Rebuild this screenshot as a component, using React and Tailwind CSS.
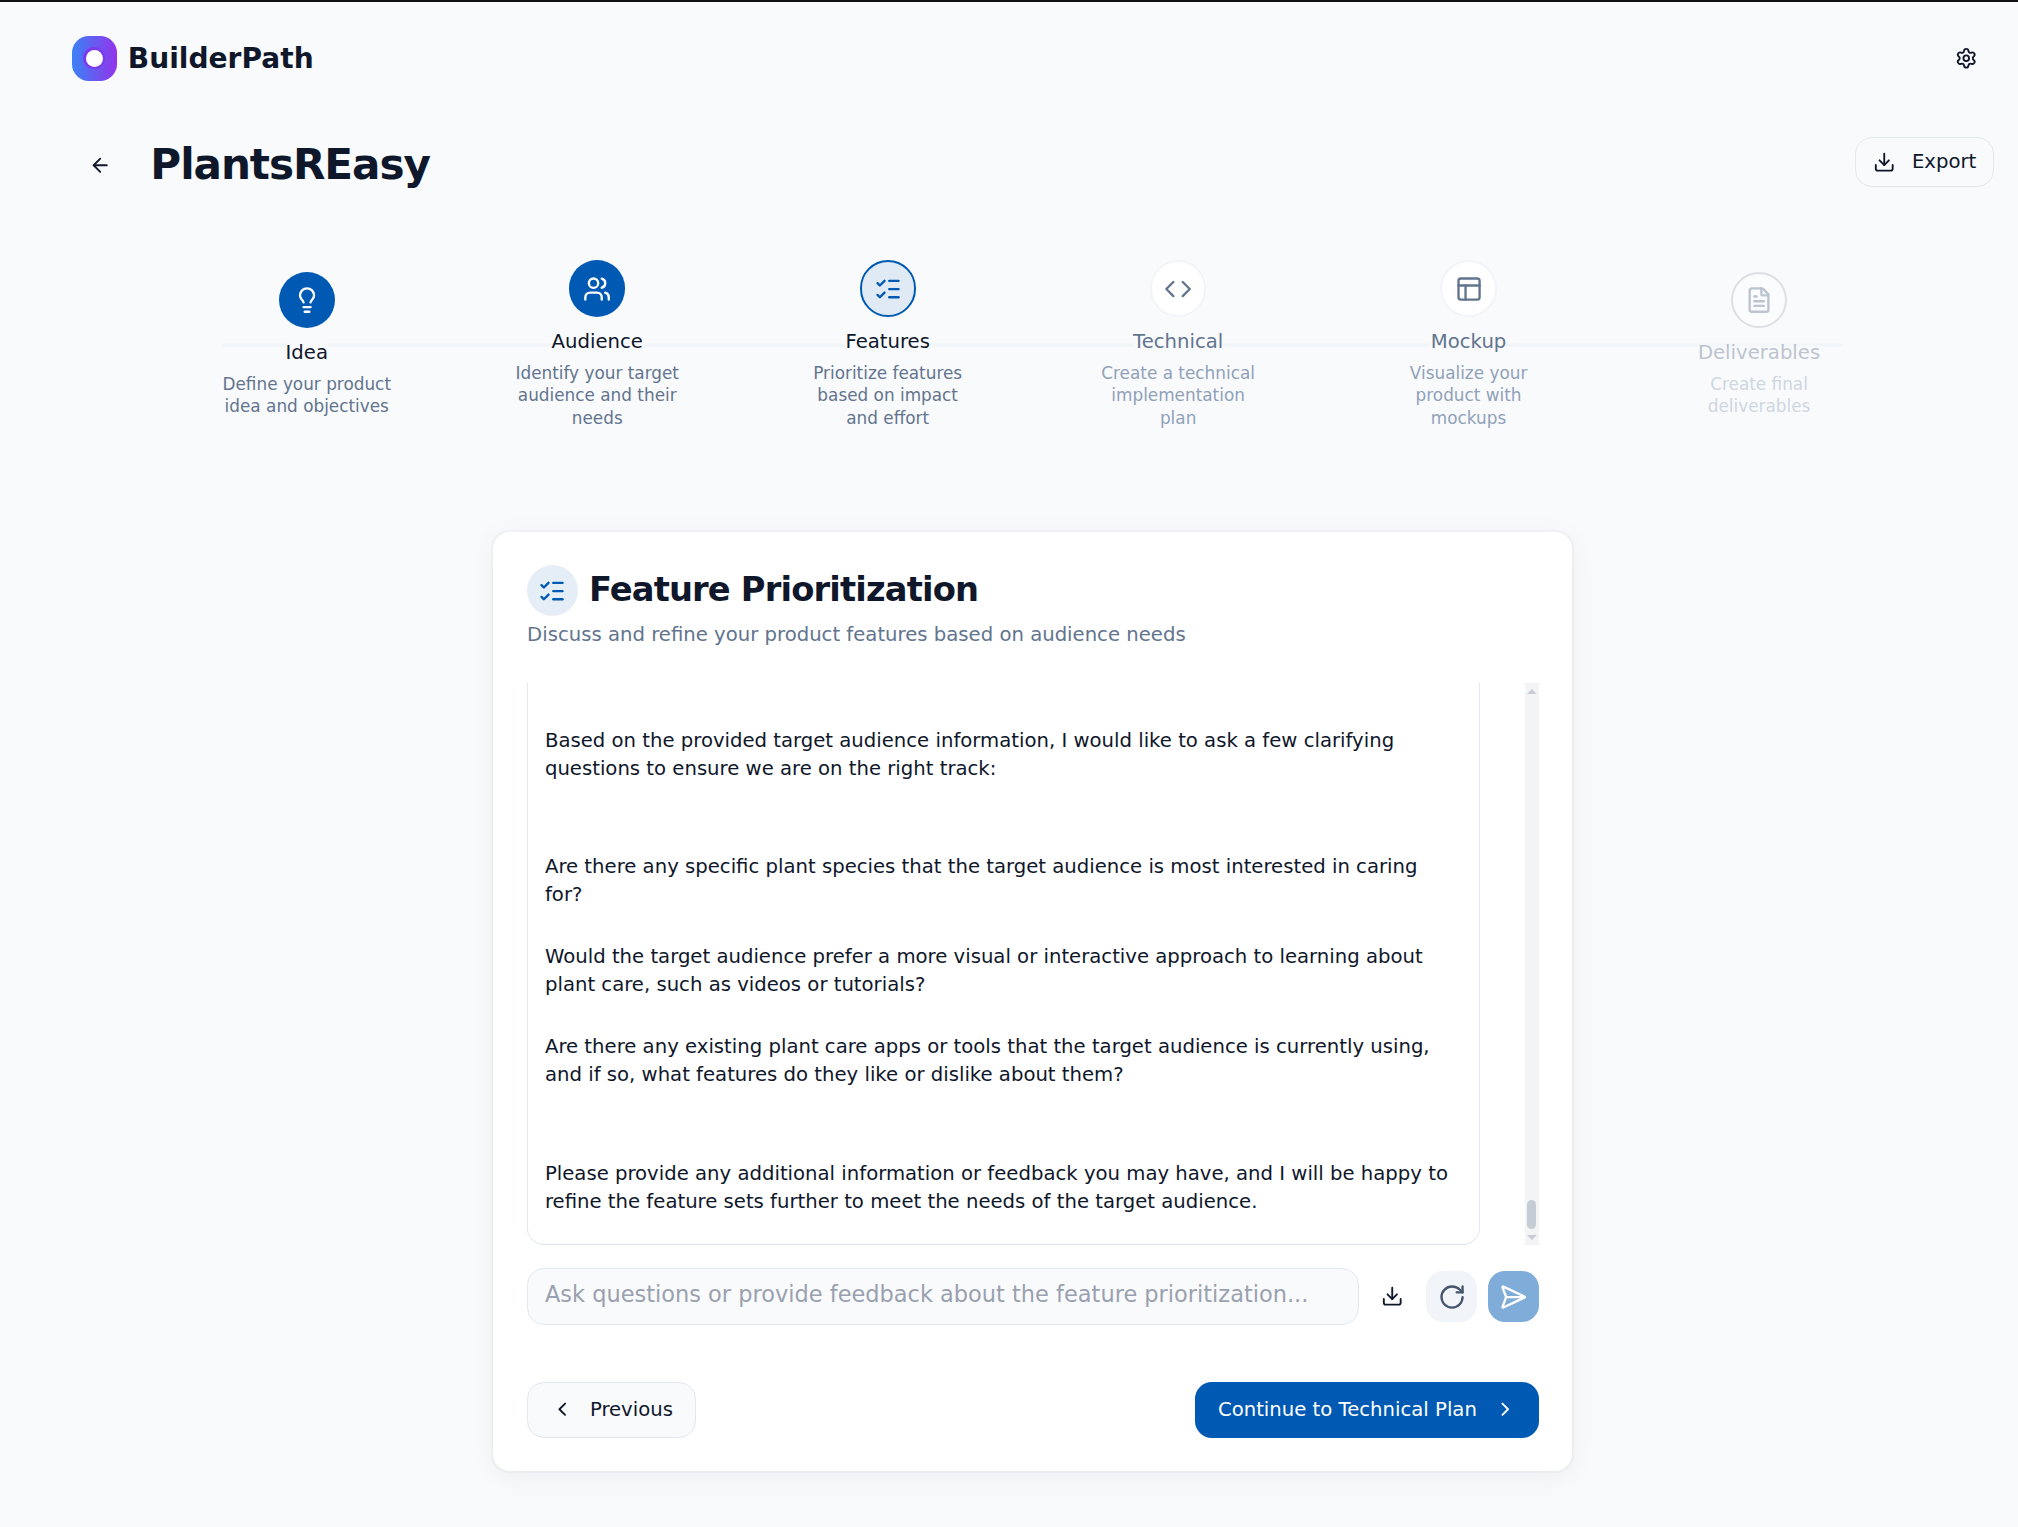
import React from "react";
import {
  ArrowLeft,
  ChevronLeft,
  ChevronRight,
  Code,
  FileText,
  Lightbulb,
  ListChecks,
  RotateCw,
  Settings,
  Users,
} from "lucide-react";

function TrayDownload() {
  return (
    <svg viewBox="0 0 24 24" className="size-4" fill="none" stroke="currentColor" strokeWidth="2" strokeLinecap="round" strokeLinejoin="round" aria-hidden="true">
      <path d="M21 15v4a2 2 0 0 1-2 2H5a2 2 0 0 1-2-2v-4" />
      <path d="m7 10 5 5 5-5" />
      <path d="M12 15V3" />
    </svg>
  );
}

function LayoutIcon({ className }) {
  return (
    <svg viewBox="0 0 24 24" className={className} fill="none" stroke="currentColor" strokeWidth="2" strokeLinecap="round" strokeLinejoin="round" aria-hidden="true">
      <rect width="18" height="18" x="3" y="3" rx="2" />
      <path d="M3 9h18" />
      <path d="M9 21V9" />
    </svg>
  );
}

const steps = [
  { label: "Idea", text: "Define your product idea and objectives", icon: Lightbulb, state: "done" },
  { label: "Audience", text: "Identify your target audience and their needs", icon: Users, state: "done" },
  { label: "Features", text: "Prioritize features based on impact and effort", icon: ListChecks, state: "current" },
  { label: "Technical", text: "Create a technical implementation plan", icon: Code, state: "next" },
  { label: "Mockup", text: "Visualize your product with mockups", icon: LayoutIcon, state: "next" },
  { label: "Deliverables", text: "Create final deliverables", icon: FileText, state: "locked" },
];

const looks = {
  done: { item: "", circle: "bg-[#0059b3] text-white", label: "text-slate-900", text: "text-slate-500" },
  current: { item: "", circle: "border-2 border-[#0059b3] bg-[#e0eaf4] text-[#0059b3]", label: "text-slate-900", text: "text-slate-500" },
  next: { item: "", circle: "border-2 border-slate-100 bg-white text-slate-500", label: "text-slate-500", text: "text-slate-400" },
  locked: { item: "opacity-40", circle: "border-2 border-[#b5b8c4] bg-white text-slate-500", label: "text-slate-500", text: "text-slate-400" },
};

function Step({ step }) {
  const look = looks[step.state];
  const Icon = step.icon;
  return (
    <li className={`flex flex-1 flex-col items-center text-center ${look.item}`}>
      <span className={`flex size-10 items-center justify-center rounded-full ${look.circle}`}>
        <Icon className="size-5" />
      </span>
      <span className={`mt-2 bg-[#f9fafc] text-sm ${look.label}`}>{step.label}</span>
      <span className={`mt-1 max-w-[124px] text-xs ${look.text}`}>{step.text}</span>
    </li>
  );
}

function Scrollbar() {
  return (
    <div className="flex w-[10px] flex-col items-center justify-between bg-gray-100 py-1 text-[#c5ccd5]" aria-hidden="true">
      <svg viewBox="0 0 10 5" className="w-[7px]" fill="currentColor"><path d="M5 0l5 5H0z" /></svg>
      <div className="flex flex-col items-center gap-1">
        <div className="h-[21px] w-[6px] rounded-full bg-[#c5ccd5]" />
        <svg viewBox="0 0 10 5" className="w-[7px]" fill="currentColor"><path d="M5 5L0 0h10z" /></svg>
      </div>
    </div>
  );
}

export default function App() {
  return (
    <div className="min-h-screen border-t-2 border-[#111116] bg-[#f9fafc]">
      <div className="pr-[17px] pl-[51px] pb-8 font-['DejaVu_Sans',sans-serif] text-sm text-slate-900 [zoom:1.405]">
        <header className="flex items-center justify-between pt-6">
          <a href="#" className="flex items-center gap-2">
            <span className="flex size-8 items-center justify-center rounded-xl bg-linear-to-r/srgb from-[#3b82f6] to-[#9333ea]">
              <span className="flex size-4 items-center justify-center rounded-full bg-[#7c3aed]">
                <span className="size-3 rounded-full bg-white" />
              </span>
            </span>
            <span className="text-xl font-bold">BuilderPath</span>
          </a>
          <button type="button" aria-label="Settings" className="flex h-8 w-10 items-center justify-center">
            <Settings className="size-4" />
          </button>
        </header>

        <div className="mt-10 flex items-start justify-between">
          <div className="flex items-center gap-4">
            <button type="button" aria-label="Back" className="flex size-10 items-center justify-center">
              <ArrowLeft className="size-4" />
            </button>
            <h1 className="text-3xl font-bold tracking-tight">PlantsREasy</h1>
          </div>
          <button type="button" className="flex h-9 items-center gap-3 rounded-xl border border-slate-200 px-3">
            <TrayDownload />
            Export
          </button>
        </div>

        <nav className="relative mt-12 px-16" aria-label="Project steps">
          <div className="absolute inset-x-[108px] top-1/2 h-[2px] -translate-y-1/2 bg-slate-100" />
          <ol className="relative flex items-center">
            {steps.map((step) => (
              <Step key={step.label} step={step} />
            ))}
          </ol>
        </nav>

        <main className="mx-auto mt-[73px] max-w-3xl rounded-xl bg-white p-6 shadow-[0_0_1px_1px_rgba(15,23,42,0.03),0_4px_20px_rgba(15,23,42,0.05)]">
          <div className="flex items-center gap-2">
            <span className="flex size-9 items-center justify-center rounded-full bg-[#e5eef7] text-[#0059b3]">
              <ListChecks className="size-5" />
            </span>
            <h2 className="text-2xl font-bold tracking-tight">Feature Prioritization</h2>
          </div>
          <p className="mt-1 text-slate-500">Discuss and refine your product features based on audience needs</p>

          <section className="mt-6 flex h-[400px] gap-8" aria-label="Conversation">
            <div className="flex flex-1 flex-col rounded-b-xl border-x border-b border-slate-200 pt-[31px] pr-[14px] pl-3">
              <p>Based on the provided target audience information, I would like to ask a few clarifying questions to ensure we are on the right track:</p>
              <ul className="my-[50px] flex flex-col gap-6">
                <li>Are there any specific plant species that the target audience is most interested in caring for?</li>
                <li>Would the target audience prefer a more visual or interactive approach to learning about plant care, such as videos or tutorials?</li>
                <li>Are there any existing plant care apps or tools that the target audience is currently using, and if so, what features do they like or dislike about them?</li>
              </ul>
              <p>Please provide any additional information or feedback you may have, and I will be happy to refine the feature sets further to meet the needs of the target audience.</p>
            </div>
            <Scrollbar />
          </section>

          <form className="mt-4 flex items-center gap-2" onSubmit={(e) => e.preventDefault()}>
            <input
              type="text"
              aria-label="Message"
              placeholder="Ask questions or provide feedback about the feature prioritization..."
              className="h-[41px] min-w-0 flex-1 rounded-xl border border-slate-200 bg-[#f9fafc] px-3 pb-1 text-base placeholder:text-gray-400"
            />
            <button type="button" aria-label="Download" className="flex size-8 items-center justify-center">
              <TrayDownload />
            </button>
            <button type="button" aria-label="Refresh" className="flex size-9 items-center justify-center rounded-xl bg-slate-100 text-slate-600">
              <RotateCw className="size-5" />
            </button>
            <button type="submit" aria-label="Send" className="flex size-9 items-center justify-center rounded-xl bg-[#80acd9] text-white">
              <svg viewBox="0 0 24 24" className="size-5" fill="none" stroke="currentColor" strokeWidth="2" strokeLinecap="round" strokeLinejoin="round" aria-hidden="true">
                <path d="M3.7 3.05a.5.5 0 0 0-.68.63l2.84 7.62a2 2 0 0 1 0 1.4l-2.84 7.62a.5.5 0 0 0 .68.63l18-8.5a.5.5 0 0 0 0-.9z" />
                <path d="M6 12h16" />
              </svg>
            </button>
          </form>

          <div className="mt-10 flex justify-between">
            <button type="button" className="flex h-10 items-center gap-3 rounded-xl border border-slate-200 bg-[#f9fafc] px-4">
              <ChevronLeft className="size-4" />
              Previous
            </button>
            <button type="button" className="flex h-10 items-center gap-3 rounded-xl bg-[#0059b3] px-4 text-white">
              Continue to Technical Plan
              <ChevronRight className="size-4" />
            </button>
          </div>
        </main>
      </div>
    </div>
  );
}
